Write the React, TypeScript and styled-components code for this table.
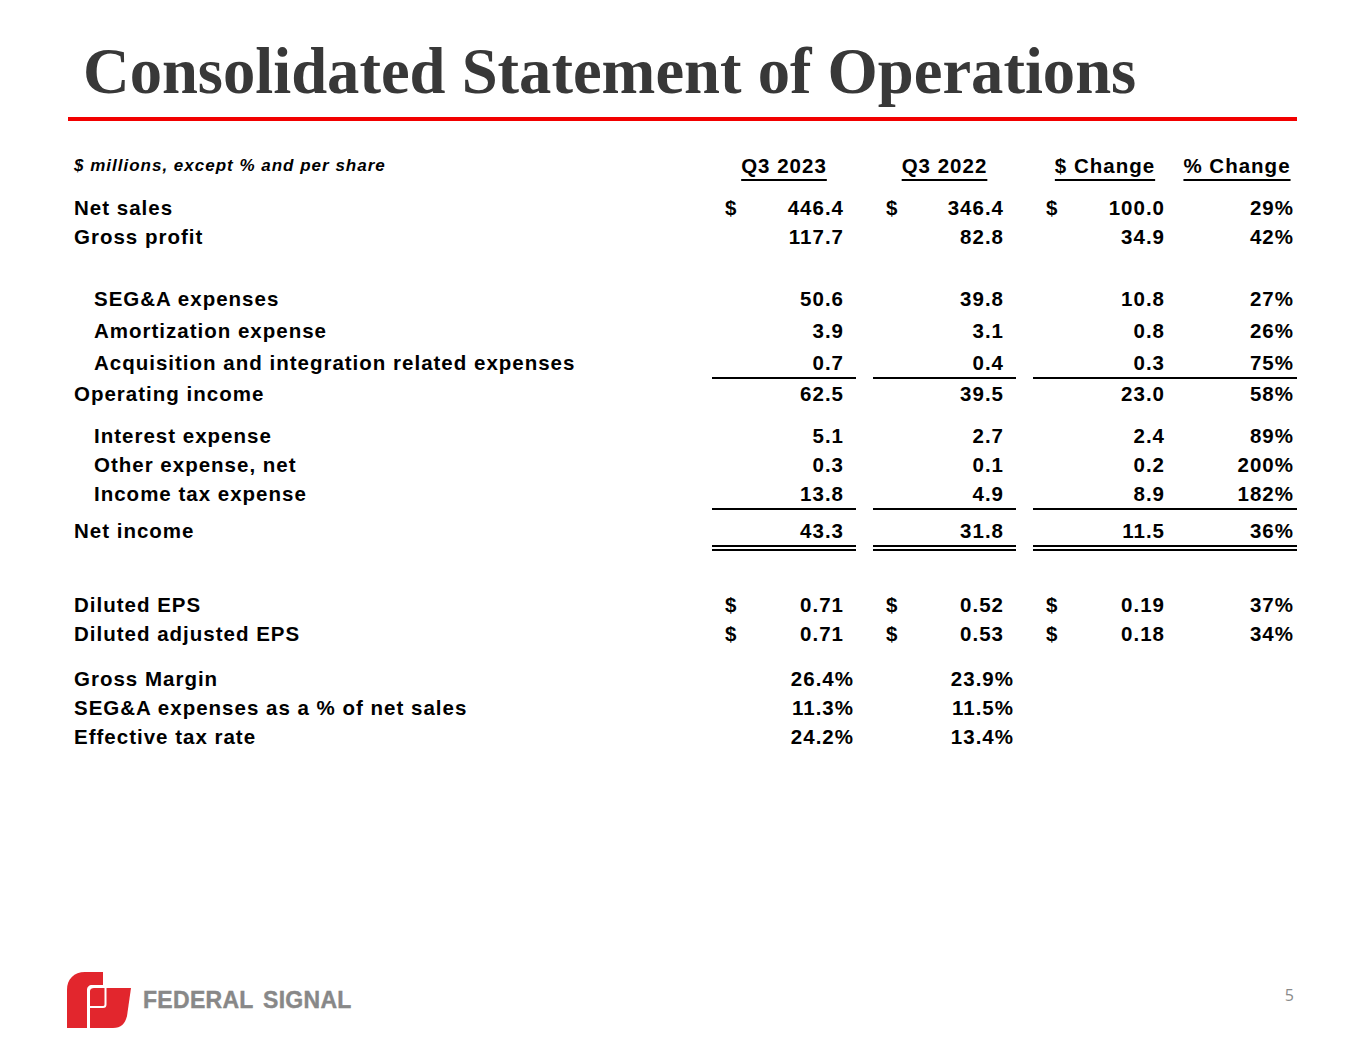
import React from "react";
import styled, { createGlobalStyle, css } from "styled-components";

const GlobalStyle = createGlobalStyle`
  html, body {
    margin: 0;
    padding: 0;
    background: #fff;
  }
  body {
    font-family: "Liberation Sans", Arial, sans-serif;
    color: #000;
  }
`;

type Rule = "single" | "double" | undefined;

const ruleStyle = (rule: Rule) => {
  if (rule === "single") return css`border-bottom: 2px solid #000;`;
  if (rule === "double") return css`border-bottom: 6px double #000;`;
  return css``;
};

const Slide = styled.div`
  width: 1365px;
  height: 1055px;
  display: flex;
  flex-direction: column;
  overflow: hidden;
`;

const Title = styled.h1`
  margin: 39px 0 0 83px;
  font-family: "Liberation Serif", "Times New Roman", serif;
  font-weight: 700;
  font-size: 64.6px;
  line-height: 64px;
  color: #383838;
  white-space: nowrap;
`;

const RedRule = styled.div`
  margin: 14px 0 0 68px;
  width: 1229px;
  height: 4px;
  background: #f20000;
`;

const Table = styled.div`
  margin: 30px 0 0 74px;
  width: 1223px;
  font-size: 20.5px;
  font-weight: 700;
  letter-spacing: 1px;
  line-height: 29px;
`;

const Row = styled.div<{ $gap?: number }>`
  display: grid;
  grid-template-columns: 621px 144px 143px 264px;
  column-gap: 17px;
  margin-top: ${(p) => p.$gap ?? 0}px;
`;

const Caption = styled.div`
  font-size: 17px;
  font-style: italic;
  letter-spacing: 1px;
`;

const HeadCell = styled.div`
  text-align: center;
  text-decoration: underline;
  text-decoration-thickness: 2px;
  text-underline-offset: 6px;
`;

const Label = styled.div<{ $indent?: boolean }>`
  padding-left: ${(p) => (p.$indent ? 20 : 0)}px;
  white-space: nowrap;
`;

const Money = styled.div<{ $rule?: Rule }>`
  display: flex;
  justify-content: space-between;
  padding: 0 12px 0 13px;
  ${(p) => ruleStyle(p.$rule)}
`;

const Value = styled.span<{ $pct?: boolean }>`
  margin-right: ${(p) => (p.$pct ? -10 : 0)}px;
`;

const ChangeGroup = styled.div<{ $rule?: Rule }>`
  display: grid;
  grid-template-columns: 144px 120px;
  ${(p) => ruleStyle(p.$rule)}
`;

const Pct = styled.div`
  text-align: right;
  padding-right: 3px;
`;

const Footer = styled.div`
  margin-top: auto;
  margin-bottom: 27px;
  display: flex;
  align-items: center;
  justify-content: space-between;
  padding: 0 71px 0 67px;
`;

const Logo = styled.div`
  display: flex;
  align-items: center;
  gap: 12px;
  svg {
    display: block;
  }
`;

const Brand = styled.span`
  font-family: "Liberation Sans", Arial, sans-serif;
  font-weight: 700;
  font-size: 23px;
  letter-spacing: 0.3px;
  word-spacing: 3px;
  color: #888;
  -webkit-text-stroke: 0.4px #888;
`;

const PageNo = styled.span`
  font-family: "Open Sans", "Liberation Sans", sans-serif;
  font-size: 16px;
  color: #8a8a8a;
  padding-bottom: 10px;
`;

type Line = {
  label: string;
  indent?: boolean;
  gap?: number;
  rule?: Rule;
  dollar?: boolean;
  ratio?: boolean;
  cur: string;
  prior: string;
  change?: string;
  pct?: string;
};

const lines: Line[] = [
  { label: "Net sales", gap: 13, dollar: true, cur: "446.4", prior: "346.4", change: "100.0", pct: "29%" },
  { label: "Gross profit", cur: "117.7", prior: "82.8", change: "34.9", pct: "42%" },
  { label: "SEG&A expenses", indent: true, gap: 33, cur: "50.6", prior: "39.8", change: "10.8", pct: "27%" },
  { label: "Amortization expense", indent: true, gap: 3, cur: "3.9", prior: "3.1", change: "0.8", pct: "26%" },
  { label: "Acquisition and integration related expenses", indent: true, gap: 3, rule: "single", cur: "0.7", prior: "0.4", change: "0.3", pct: "75%" },
  { label: "Operating income", cur: "62.5", prior: "39.5", change: "23.0", pct: "58%" },
  { label: "Interest expense", indent: true, gap: 13, cur: "5.1", prior: "2.7", change: "2.4", pct: "89%" },
  { label: "Other expense, net", indent: true, cur: "0.3", prior: "0.1", change: "0.2", pct: "200%" },
  { label: "Income tax expense", indent: true, rule: "single", cur: "13.8", prior: "4.9", change: "8.9", pct: "182%" },
  { label: "Net income", gap: 6, rule: "double", cur: "43.3", prior: "31.8", change: "11.5", pct: "36%" },
  { label: "Diluted EPS", gap: 39, dollar: true, cur: "0.71", prior: "0.52", change: "0.19", pct: "37%" },
  { label: "Diluted adjusted EPS", dollar: true, cur: "0.71", prior: "0.53", change: "0.18", pct: "34%" },
  { label: "Gross Margin", gap: 16, ratio: true, cur: "26.4%", prior: "23.9%" },
  { label: "SEG&A expenses as a % of net sales", ratio: true, cur: "11.3%", prior: "11.5%" },
  { label: "Effective tax rate", ratio: true, cur: "24.2%", prior: "13.4%" },
];

const LogoMark = () => (
  <svg width="64" height="56" viewBox="0 0 64 56">
    <path
      d="M0 18 C0 7 7 0 18 0 L36 0 L36 13 L25 13 C22 13 20 15 20 18 L20 56 L0 56 Z"
      fill="#e2262d"
    />
    <path
      d="M23 19 C23 17 25 16 27 16 L64 16 L60 44 C58 52 54 56 46 56 L23 56 Z"
      fill="#e2262d"
    />
    <path d="M23 35 L36 35 C37.5 35 38.5 34 38.5 32.5 L38.5 16" stroke="#fff" strokeWidth="2" fill="none" />
  </svg>
);

const StatementRow = ({ line }: { line: Line }) => (
  <Row $gap={line.gap}>
    <Label $indent={line.indent}>{line.label}</Label>
    <Money $rule={line.rule}>
      <span>{line.dollar ? "$" : ""}</span>
      <Value $pct={line.ratio}>{line.cur}</Value>
    </Money>
    <Money $rule={line.rule}>
      <span>{line.dollar ? "$" : ""}</span>
      <Value $pct={line.ratio}>{line.prior}</Value>
    </Money>
    {line.ratio ? (
      <div />
    ) : (
      <ChangeGroup $rule={line.rule}>
        <Money>
          <span>{line.dollar ? "$" : ""}</span>
          <Value>{line.change}</Value>
        </Money>
        <Pct>{line.pct}</Pct>
      </ChangeGroup>
    )}
  </Row>
);

const App: React.FC = () => {
  return (
    <Slide>
      <GlobalStyle />
      <Title>Consolidated Statement of Operations</Title>
      <RedRule />
      <Table>
        <Row>
          <Caption>$ millions, except % and per share</Caption>
          <HeadCell>Q3 2023</HeadCell>
          <HeadCell>Q3 2022</HeadCell>
          <ChangeGroup>
            <HeadCell>$ Change</HeadCell>
            <HeadCell>% Change</HeadCell>
          </ChangeGroup>
        </Row>
        {lines.map((line) => (
          <StatementRow key={line.label} line={line} />
        ))}
      </Table>
      <Footer>
        <Logo>
          <LogoMark />
          <Brand>FEDERAL SIGNAL</Brand>
        </Logo>
        <PageNo>5</PageNo>
      </Footer>
    </Slide>
  );
};

export default App;
